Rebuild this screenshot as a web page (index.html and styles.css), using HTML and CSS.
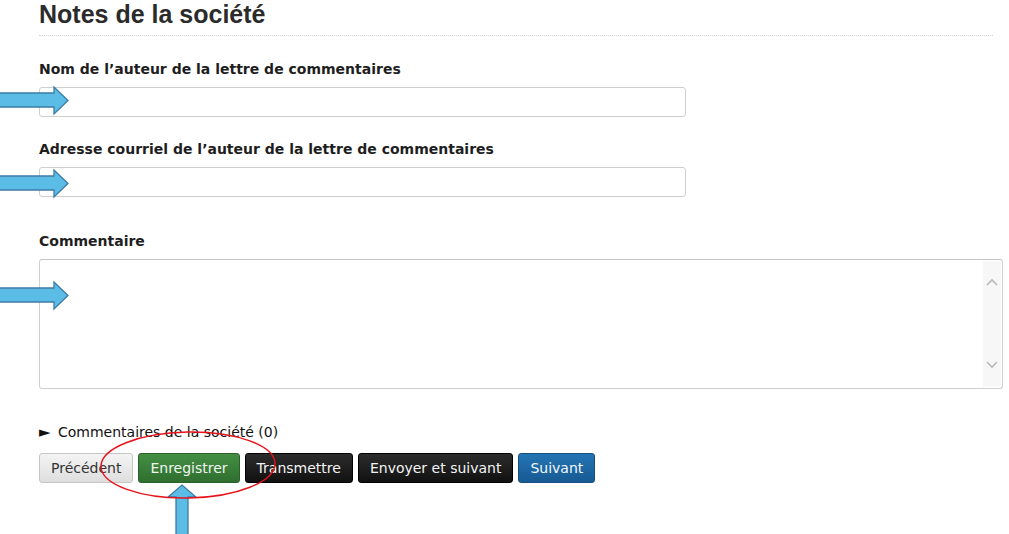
FILE: index.html
```html
<!DOCTYPE html>
<html lang="fr">
<head>
<meta charset="utf-8">
<title>Notes de la société</title>
<link rel="stylesheet" href="styles.css">
</head>
<body>
<div class="page">
  <h1 class="title">Notes de la société</h1>

  <label class="label first">Nom de l’auteur de la lettre de commentaires</label>
  <div class="input short"></div>

  <label class="label">Adresse courriel de l’auteur de la lettre de commentaires</label>
  <div class="input short"></div>

  <label class="label third">Commentaire</label>
  <div class="textarea">
    <div class="ta-body"></div>
    <div class="ta-scroll">
      <svg width="12" height="8" viewBox="0 0 12 8"><path d="M1 7 L6 2 L11 7" fill="none" stroke="#b9b9b9" stroke-width="1.6"/></svg>
      <svg width="12" height="8" viewBox="0 0 12 8"><path d="M1 1 L6 6 L11 1" fill="none" stroke="#b9b9b9" stroke-width="1.6"/></svg>
    </div>
  </div>

  <div class="toggle"><span class="tri">►</span>Commentaires de la société (0)</div>

  <div class="buttons">
    <button class="btn btn-default">Précédent</button>
    <button class="btn btn-green">Enregistrer</button>
    <button class="btn btn-black">Transmettre</button>
    <button class="btn btn-black">Envoyer et suivant</button>
    <button class="btn btn-blue">Suivant</button>
  </div>
</div>

<svg class="overlay" width="1009" height="534" viewBox="0 0 1009 534">
  <g fill="#5bbde6" stroke="#3b7ca6" stroke-width="1.3" stroke-linejoin="miter">
    <path d="M-2 93 L54 93 L54 87 L68 100.5 L54 114 L54 107 L-2 107 Z"/>
    <path d="M-2 176 L54 176 L54 170 L68 183.5 L54 197 L54 190 L-2 190 Z"/>
    <path d="M-2 288 L54 288 L54 282 L68 295.5 L54 309 L54 302 L-2 302 Z"/>
    <path d="M176 536 L176 497 L168 497 L182 485 L196 497 L188 497 L188 536 Z"/>
  </g>
  <ellipse cx="188" cy="465" rx="87" ry="33" fill="none" stroke="#e8121a" stroke-width="1.4" transform="rotate(-1 188 465)"/>
</svg>
</body>
</html>
```

FILE: styles.css
```css
html, body {
  margin: 0;
  padding: 0;
  background: #fff;
}

body {
  position: relative;
  width: 1009px;
  height: 534px;
  overflow: hidden;
  font-family: "DejaVu Sans", Verdana, sans-serif;
  font-size: 14px;
  color: #222;
}

.page {
  padding: 0 6px 0 39px;
  display: flex;
  flex-direction: column;
  align-items: flex-start;
}

.title {
  margin: 0 10px 0 0;
  align-self: stretch;
  padding: 0 0 6px 0;
  font-family: "Liberation Sans", Arial, sans-serif;
  font-size: 25px;
  line-height: 29px;
  font-weight: bold;
  color: #2b2b2b;
  border-bottom: 1px dotted #d4d4d4;
}

.label {
  display: block;
  font-weight: bold;
  font-size: 14px;
  line-height: 18px;
  margin: 23px 0 9px 0;
  color: #1e1e1e;
}

.label.first {
  margin-top: 24px;
}

.label.third {
  margin-top: 35px;
}

.input {
  box-sizing: border-box;
  height: 30px;
  border: 1px solid #cfcfcf;
  border-radius: 3px;
  background: #fff;
}

.input.short {
  width: 647px;
}

.textarea {
  box-sizing: border-box;
  align-self: stretch;
  height: 130px;
  border: 1px solid #cfcfcf;
  border-top-color: #c4c4c4;
  border-radius: 3px;
  display: flex;
  background: #fff;
}

.ta-body {
  flex: 1;
}

.ta-scroll {
  width: 18px;
  margin: 1px 1px 1px 0;
  background: #f7f7f7;
  display: flex;
  flex-direction: column;
  justify-content: space-between;
  align-items: center;
  padding: 17px 0 18px 0;
}

.ta-scroll svg {
  display: block;
}

.toggle {
  margin-top: 34px;
  line-height: 18px;
  font-size: 14px;
  color: #111;
  display: flex;
  align-items: center;
}

.tri {
  font-size: 15px;
  width: 19px;
  color: #111;
}

.buttons {
  margin-top: 12px;
  display: flex;
  gap: 5px;
}

.btn {
  box-sizing: border-box;
  height: 30px;
  padding: 0 11px;
  font-family: "DejaVu Sans", Verdana, sans-serif;
  font-size: 14px;
  border-radius: 3px;
  border: 1px solid;
  cursor: pointer;
}

.btn-default {
  color: #333;
  background: linear-gradient(#f4f4f4, #dedede);
  border-color: #c6c6c6;
}

.btn-green {
  color: #eef5ee;
  background: linear-gradient(#448f44, #2f6e2f);
  border-color: #2a612a;
}

.btn-black {
  color: #f4f4f4;
  background: linear-gradient(#2c2c2c, #111);
  border-color: #000;
}

.btn-blue {
  color: #f2f7fc;
  background: linear-gradient(#2474b3, #175a93);
  border-color: #144f80;
}

.overlay {
  position: absolute;
  left: 0;
  top: 0;
  pointer-events: none;
}
```
